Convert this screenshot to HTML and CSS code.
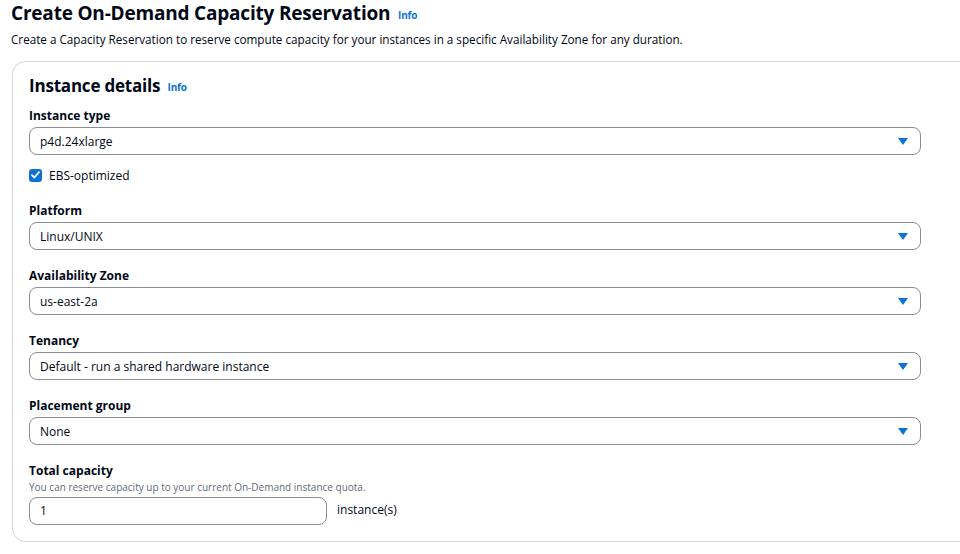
FILE: index.html
```html
<!DOCTYPE html>
<html lang="en">
<head>
    <meta charset="UTF-8">
    <meta name="viewport" content="width=device-width, initial-scale=1.0">
    <title>Create On-Demand Capacity Reservation</title>
    <link rel="stylesheet" href="styles.css">
</head>
<body>
    <header class="page-header">
        <h1>Create On-Demand Capacity Reservation <a class="info" href="#">Info</a></h1>
        <p class="page-desc">Create a Capacity Reservation to reserve compute capacity for your instances in a specific Availability Zone for any duration.</p>
    </header>

    <section class="card">
        <h2>Instance details <a class="info" href="#">Info</a></h2>

        <div class="field">
            <label class="field-label">Instance type</label>
            <div class="select">
                <span>p4d.24xlarge</span>
                <svg class="caret" width="10" height="7" viewBox="0 0 10 7"><path d="M0 0h10L5 7z" fill="#0972d3"/></svg>
            </div>
            <label class="check">
                <span class="box">
                    <svg width="9" height="8" viewBox="0 0 9 8"><path d="M1 4.2l2.4 2.3L8 1.2" fill="none" stroke="#fff" stroke-width="1.8" stroke-linecap="round" stroke-linejoin="round"/></svg>
                </span>
                EBS-optimized
            </label>
        </div>

        <div class="field">
            <label class="field-label">Platform</label>
            <div class="select">
                <span>Linux/UNIX</span>
                <svg class="caret" width="10" height="7" viewBox="0 0 10 7"><path d="M0 0h10L5 7z" fill="#0972d3"/></svg>
            </div>
        </div>

        <div class="field">
            <label class="field-label">Availability Zone</label>
            <div class="select">
                <span>us-east-2a</span>
                <svg class="caret" width="10" height="7" viewBox="0 0 10 7"><path d="M0 0h10L5 7z" fill="#0972d3"/></svg>
            </div>
        </div>

        <div class="field">
            <label class="field-label">Tenancy</label>
            <div class="select">
                <span>Default - run a shared hardware instance</span>
                <svg class="caret" width="10" height="7" viewBox="0 0 10 7"><path d="M0 0h10L5 7z" fill="#0972d3"/></svg>
            </div>
        </div>

        <div class="field">
            <label class="field-label">Placement group</label>
            <div class="select">
                <span>None</span>
                <svg class="caret" width="10" height="7" viewBox="0 0 10 7"><path d="M0 0h10L5 7z" fill="#0972d3"/></svg>
            </div>
        </div>

        <div class="field">
            <label class="field-label">Total capacity</label>
            <p class="hint">You can reserve capacity up to your current On-Demand instance quota.</p>
            <div class="capacity-row">
                <div class="text-input">1</div>
                <span class="unit">instance(s)</span>
            </div>
        </div>
    </section>
</body>
</html>
```

FILE: styles.css
```css
body {
    margin: 0;
    padding: 0 0 0 11px;
    font-family: "Open Sans", "Noto Sans", Arial, sans-serif;
    color: #000716;
    background-color: #ffffff;
    overflow: hidden;
}
h1 {
    margin: 0;
    font-size: 19px;
    line-height: 26px;
    font-weight: 700;
    letter-spacing: -0.2px;
}
.info {
    color: #0972d3;
    font-size: 10px;
    font-weight: 700;
    text-decoration: none;
    margin-left: 3px;
    vertical-align: middle;
}
.page-desc {
    margin: 2px 0 0;
    font-size: 11.7px;
    line-height: 18px;
}
.card {
    margin-top: 13px;
    margin-left: 1px;
    border: 1px solid #d8d8db;
    border-right: none;
    border-radius: 14px 0 0 14px;
    padding: 12px 0 16px 16px;
}
h2 {
    margin: 0 0 8px;
    font-size: 17px;
    line-height: 24px;
    font-weight: 700;
    letter-spacing: -0.2px;
}
.field {
    width: 892px;
    margin-bottom: 17px;
}
.field:last-child {
    margin-bottom: 0;
}
.field-label {
    display: block;
    font-size: 12px;
    font-weight: 700;
    line-height: 18px;
    margin-bottom: 2px;
}
.select {
    display: flex;
    align-items: center;
    justify-content: space-between;
    height: 26px;
    border: 1px solid #8c8c94;
    border-radius: 8px;
    padding: 0 12px 0 10px;
    font-size: 12px;
}
.check {
    display: flex;
    align-items: center;
    gap: 7px;
    margin-top: 10px;
    height: 20px;
    font-size: 12px;
}
.box {
    display: flex;
    align-items: center;
    justify-content: center;
    width: 13px;
    height: 13px;
    border-radius: 3px;
    background-color: #0972d3;
}
.hint {
    margin: -2px 0 3px;
    font-size: 10px;
    line-height: 14px;
    color: #5f6b7a;
}
.capacity-row {
    display: flex;
    align-items: center;
    gap: 10px;
}
.text-input {
    width: 276px;
    height: 26px;
    line-height: 26px;
    border: 1px solid #8c8c94;
    border-radius: 8px;
    padding: 0 10px;
    font-size: 12px;
}
.unit {
    font-size: 12px;
    margin-top: -4px;
}
```
